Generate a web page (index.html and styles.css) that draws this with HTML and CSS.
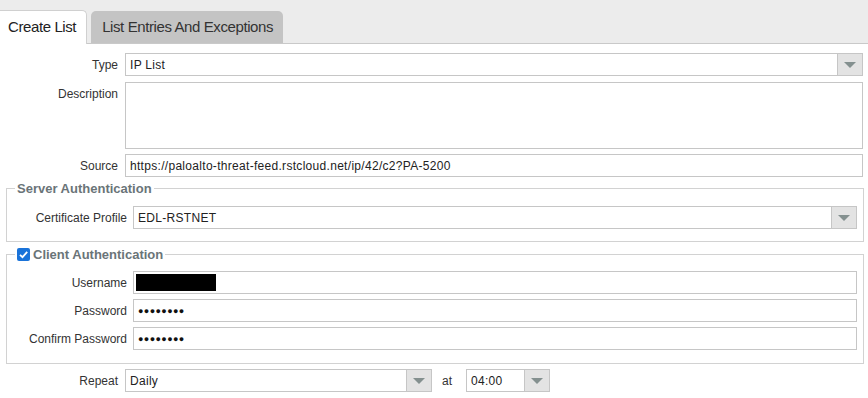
FILE: index.html
```html
<!DOCTYPE html>
<html lang="en">
<head>
    <meta charset="UTF-8">
    <title>EDL - Create List</title>
    <link rel="stylesheet" href="styles.css">
</head>
<body>
    <div class="tabs">
        <div class="tab active">Create List</div>
        <div class="tab">List Entries And Exceptions</div>
    </div>

    <div class="form">
        <div class="row first">
            <label>Type</label>
            <div class="select">
                <span class="value">IP List</span>
                <span class="arrow"></span>
            </div>
        </div>
        <div class="row">
            <label class="top">Description</label>
            <div class="box textarea"></div>
        </div>
        <div class="row">
            <label>Source</label>
            <div class="box"><span class="value">https://paloalto-threat-feed.rstcloud.net/ip/42/c2?PA-5200</span></div>
        </div>
    </div>

    <fieldset class="group server">
        <legend>Server Authentication</legend>
        <div class="row">
            <label>Certificate Profile</label>
            <div class="select">
                <span class="value">EDL-RSTNET</span>
                <span class="arrow"></span>
            </div>
        </div>
    </fieldset>

    <fieldset class="group client">
        <legend><span class="check"><svg viewBox="0 0 13 13" width="13" height="13"><path d="M3 6.8 L5.5 9.2 L10.2 3.8" fill="none" stroke="#fff" stroke-width="1.8"/></svg></span>Client Authentication</legend>
        <div class="row">
            <label>Username</label>
            <div class="box"><span class="redacted"></span></div>
        </div>
        <div class="row">
            <label>Password</label>
            <div class="box"><span class="dots">&#9679;&#9679;&#9679;&#9679;&#9679;&#9679;&#9679;&#9679;</span></div>
        </div>
        <div class="row">
            <label>Confirm Password</label>
            <div class="box"><span class="dots">&#9679;&#9679;&#9679;&#9679;&#9679;&#9679;&#9679;&#9679;</span></div>
        </div>
    </fieldset>

    <div class="form repeat">
        <div class="row">
            <label>Repeat</label>
            <div class="inline">
                <div class="select daily">
                    <span class="value">Daily</span>
                    <span class="arrow"></span>
                </div>
                <span class="at">at</span>
                <div class="select time">
                    <span class="value">04:00</span>
                    <span class="arrow"></span>
                </div>
            </div>
        </div>
    </div>
</body>
</html>
```

FILE: styles.css
```css
body {
    margin: 0;
    background-color: white;
    font-family: "Liberation Sans", Arial, sans-serif;
    font-size: 12px;
    color: #333;
}

.tabs {
    height: 43px;
    background-color: #ececec;
    border-bottom: 1px solid #c9c9c9;
    display: flex;
    align-items: flex-end;
    gap: 4px;
}

.tab {
    height: 32px;
    line-height: 32px;
    padding: 0 10px 0 11px;
    background-color: #c4c4c4;
    border-radius: 5px 5px 0 0;
    font-size: 15px;
    letter-spacing: -0.4px;
    color: #333;
}

.tab.active {
    background-color: white;
    border: 1px solid #d0d0d0;
    border-bottom: none;
    border-left: none;
    border-radius: 0 5px 0 0;
    height: 33px;
    margin-bottom: -1px;
    padding: 0 10px 0 8px;
    color: #222;
}

.form {
    padding: 9px 5px 0 0;
}

.row {
    display: grid;
    grid-template-columns: 118px 1fr;
    column-gap: 7px;
    margin-bottom: 5px;
    align-items: center;
}

.form .row:last-child {
    margin-bottom: 0;
}

.row.first {
    margin-bottom: 6px;
}

.row label {
    text-align: right;
    color: #333;
}

.row label.top {
    align-self: start;
    padding-top: 5px;
}

.box, .select {
    height: 21px;
    border: 1px solid #c6c6c6;
    background-color: white;
    display: flex;
    align-items: center;
    box-sizing: content-box;
}

.textarea {
    height: 65px;
}

.value {
    padding-left: 4px;
    flex: 1;
    white-space: nowrap;
    letter-spacing: 0.3px;
    color: #222;
}

.arrow {
    width: 24px;
    height: 21px;
    background-color: #e3e3e3;
    border-left: 1px solid #c6c6c6;
    position: relative;
}

.arrow::after {
    content: "";
    position: absolute;
    left: 6px;
    top: 8px;
    border-left: 6px solid transparent;
    border-right: 6px solid transparent;
    border-top: 6px solid #84908f;
}

.group {
    margin: 5px 4px 0 6px;
    border: 1px solid #d2d2d2;
    padding: 6px 6px 8px 1px;
}

.group legend {
    font-weight: bold;
    font-size: 13px;
    color: #6a7478;
    padding: 0 2px;
    margin-left: 7px;
    display: flex;
    align-items: center;
    gap: 3px;
}

.group .row {
    grid-template-columns: 119px 1fr;
    column-gap: 6px;
}

.server {
    margin-top: 4px;
    padding-top: 10px;
    padding-bottom: 8px;
}

.server .row {
    margin-bottom: 4px;
}

.client {
    margin-top: 5px;
    padding-top: 9px;
    padding-bottom: 8px;
}

.client .row {
    margin-bottom: 5px;
}

.check {
    width: 13px;
    height: 13px;
    background-color: #1a73d9;
    border-radius: 2px;
    display: inline-flex;
}

.redacted {
    display: inline-block;
    width: 80px;
    height: 17px;
    background-color: black;
    margin-left: 2px;
}

.dots {
    padding-left: 4px;
    font-size: 9px;
    letter-spacing: 0.4px;
    color: #111;
}

.repeat {
    padding-top: 5px;
}

.inline {
    display: flex;
    align-items: center;
}

.daily {
    width: 305px;
}

.at {
    margin: 0 14px 0 10px;
}

.time {
    width: 82px;
}
```
